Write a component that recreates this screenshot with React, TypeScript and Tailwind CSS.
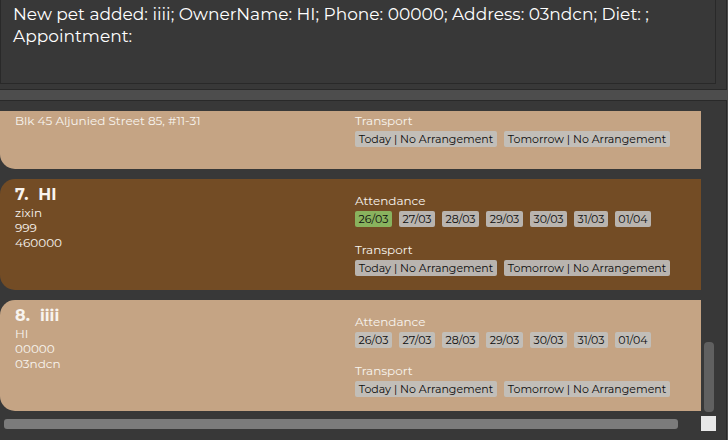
type Tone = "tan" | "brown";

interface Pet {
  no: number;
  name?: string;
  details: string[];
  tone: Tone;
  present: string[];
  clipped?: boolean;
}

const days = [
  { label: "26/03", width: "w-[37px]" },
  { label: "27/03", width: "w-[36px]" },
  { label: "28/03", width: "w-[37px]" },
  { label: "29/03", width: "w-[37px]" },
  { label: "30/03", width: "w-[37px]" },
  { label: "31/03", width: "w-[34px]" },
  { label: "01/04", width: "w-[36px]" },
];

const transport = [
  { label: "Today | No Arrangement", width: "w-[142px]" },
  { label: "Tomorrow | No Arrangement", width: "w-[166px]" },
];

const pets: Pet[] = [
  { no: 6, details: ["Blk 45 Aljunied Street 85, #11-31"], tone: "tan", present: [], clipped: true },
  { no: 7, name: "HI", details: ["zixin", "999", "460000"], tone: "brown", present: ["26/03"] },
  { no: 8, name: "iiii", details: ["HI", "00000", "03ndcn"], tone: "tan", present: [] },
];

function Chip({ label, width, tone, active }: { label: string; width: string; tone: Tone; active?: boolean }) {
  const fill = active ? "bg-[#89b35e]" : tone === "tan" ? "bg-[#c2beb8]" : "bg-[#b9b4af]";
  return (
    <span
      className={`flex h-4 shrink-0 items-center justify-center rounded-xs text-[11px] leading-4 whitespace-nowrap text-[#0c0c0c] ${width} ${fill}`}
    >
      {label}
    </span>
  );
}

function PetCard({ pet }: { pet: Pet }) {
  const fill = pet.tone === "tan" ? "bg-[#c5a484]" : "bg-[#734c25]";
  const shape = pet.clipped ? "rounded-bl-[15px] pt-[2px] pb-[22px]" : "rounded-l-[15px] pt-[5px] pb-[14px]";
  return (
    <li className={`flex pl-[15px] ${fill} ${shape}`}>
      <div className="w-[340px] shrink-0 text-[#f8f4ef]">
        {pet.name && (
          <h2 className="flex h-[21px] gap-[10px] text-base leading-[21px] font-bold">
            <span>{pet.no}.</span>
            <span>{pet.name}</span>
          </h2>
        )}
        {pet.details.map((line) => (
          <p key={line} className="text-[12px] leading-[15px]">
            {line}
          </p>
        ))}
      </div>
      <div className="text-[#f8f4ef]">
        {!pet.clipped && (
          <section className="pt-[9px] pb-[15px]">
            <h3 className="mb-[3px] text-[12px] leading-[15px]">Attendance</h3>
            <div className="flex gap-[7px]">
              {days.map((day) => (
                <Chip key={day.label} {...day} tone={pet.tone} active={pet.present.includes(day.label)} />
              ))}
            </div>
          </section>
        )}
        <section>
          <h3 className="mb-[3px] text-[12px] leading-[15px]">Transport</h3>
          <div className="flex gap-[7px]">
            {transport.map((item) => (
              <Chip key={item.label} {...item} tone={pet.tone} />
            ))}
          </div>
        </section>
      </div>
    </li>
  );
}

export default function App() {
  return (
    <main className="flex min-h-screen flex-col overflow-hidden bg-[#4d4d4d] pr-px font-['Montserrat','Inter',sans-serif]">
      <div className="border-r border-b border-[#292929] bg-[#383838] pr-[10px] pb-[5px]">
        <textarea
          readOnly
          aria-label="Result"
          className="block h-[84px] w-full resize-none overflow-hidden border-r border-b border-l border-[#292929] bg-transparent pt-[3px] pr-[12px] pl-[12px] text-[17px] leading-[22px] text-white outline-none"
          value="New pet added: iiii; OwnerName: HI; Phone: 00000; Address: 03ndcn; Diet: ; Appointment:"
        />
      </div>

      <div className="mt-[10px] flex flex-1 flex-col border-t border-r border-[#292929] bg-[#383838] pt-[10px] pr-[10px]">
        <div className="flex">
          <ul className="flex min-w-0 flex-1 flex-col gap-[10px]">
            {pets.map((pet) => (
              <PetCard key={pet.no} pet={pet} />
            ))}
          </ul>
          <div className="flex w-[15px] flex-col justify-end px-[3px]">
            <div className="-mb-px h-[70px] w-[10px] rounded-[4px] bg-[#606060]" />
          </div>
        </div>
        <div className="mt-[5px] flex items-center">
          <div className="mr-[23px] ml-1 h-[10px] flex-1 rounded-[3px] bg-[#7b7b7b]" />
          <div className="size-[15px] bg-[#e8e8e8]" />
        </div>
      </div>
    </main>
  );
}
